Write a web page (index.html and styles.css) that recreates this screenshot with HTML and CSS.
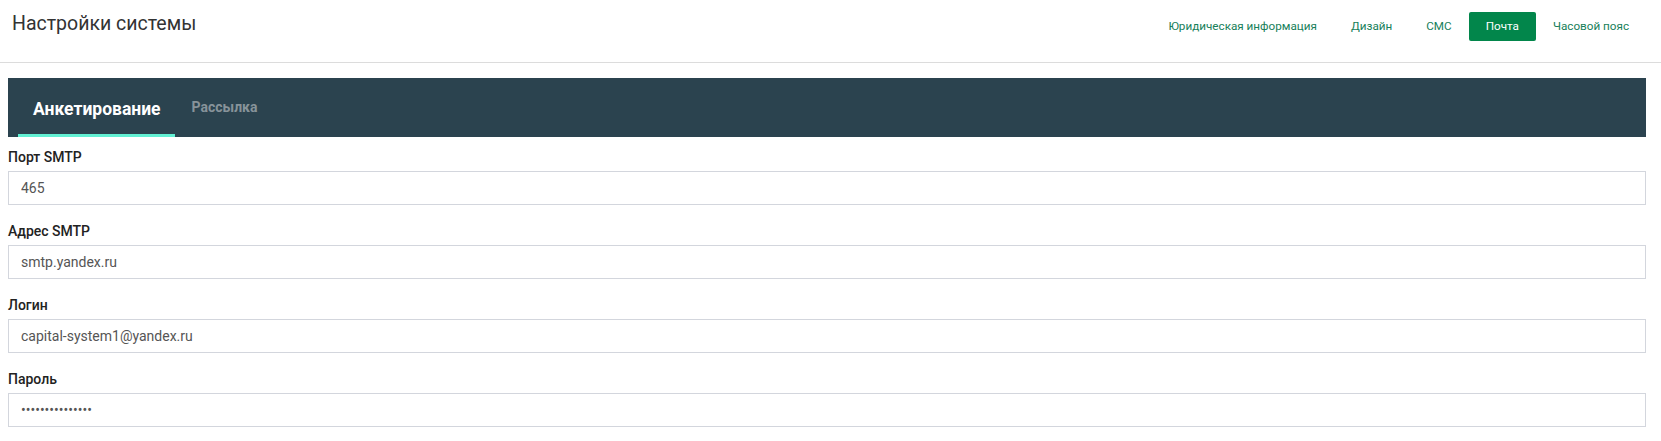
FILE: index.html
```html
<!DOCTYPE html>
<html lang="ru">
<head>
<meta charset="utf-8">
<title>Настройки системы</title>
<link rel="stylesheet" href="styles.css">
</head>
<body>
<header class="topbar">
  <h1 class="page-title">Настройки системы</h1>
  <nav class="nav">
    <a class="nav-item">Юридическая информация</a>
    <a class="nav-item">Дизайн</a>
    <a class="nav-item">СМС</a>
    <a class="nav-item nav-item--active">Почта</a>
    <a class="nav-item">Часовой пояс</a>
  </nav>
</header>
<main class="content">
  <div class="tabs">
    <div class="tab tab--active">Анкетирование</div>
    <div class="tab">Рассылка</div>
  </div>
  <form class="form">
    <div class="field">
      <label class="field-label">Порт SMTP</label>
      <input class="field-input" type="text" value="465">
    </div>
    <div class="field">
      <label class="field-label">Адрес SMTP</label>
      <input class="field-input" type="text" value="smtp.yandex.ru">
    </div>
    <div class="field">
      <label class="field-label">Логин</label>
      <input class="field-input" type="text" value="capital-system1@yandex.ru">
    </div>
    <div class="field">
      <label class="field-label">Пароль</label>
      <input class="field-input" type="password" value="passwordpasswor">
    </div>
  </form>
</main>
</body>
</html>
```
FILE: styles.css
```css
* { box-sizing: border-box; }

html, body {
  margin: 0;
  padding: 0;
  background: #ffffff;
  font-family: Roboto, "Liberation Sans", Arial, sans-serif;
  overflow: hidden;
}

.topbar {
  display: flex;
  justify-content: space-between;
  align-items: flex-start;
  height: 63px;
  padding: 0 15px 0 12px;
  border-bottom: 1px solid #dcdcdc;
}

.page-title {
  margin: 12px 0 0 0;
  font-size: 19.5px;
  font-weight: 400;
  color: #333333;
  line-height: normal;
}

.nav {
  display: flex;
  margin-top: 12px;
}

.nav-item {
  display: block;
  height: 29px;
  line-height: 29px;
  padding: 0 17px;
  font-size: 11.7px;
  color: #17805a;
  border-radius: 2px;
  cursor: pointer;
}

.nav-item--active {
  background: #02864b;
  color: #ffffff;
}

.content {
  padding: 15px 15px 0 8px;
}

.tabs {
  display: flex;
  align-items: flex-start;
  height: 59px;
  padding-left: 10px;
  background: #2b434f;
}

.tab {
  height: 59px;
  padding: 21px 17px 0 17px;
  font-size: 14px;
  font-weight: 700;
  color: #87939a;
  line-height: normal;
}

.tab--active {
  padding: 21px 14px 0 15px;
  font-size: 17.5px;
  color: #ffffff;
  border-bottom: 3px solid #62f0d3;
}

.form {
  display: flex;
  flex-direction: column;
  gap: 17px;
  padding-top: 11px;
}

.field {
  display: flex;
  flex-direction: column;
  gap: 5px;
}

.field-label {
  font-size: 14px;
  font-weight: 500;
  line-height: 18px;
  color: #222222;
}

.field-input {
  display: block;
  width: 100%;
  height: 34px;
  padding: 0 12px;
  border: 1px solid #d3d6dd;
  border-radius: 0;
  font-family: Roboto, "Liberation Sans", Arial, sans-serif;
  font-size: 14px;
  color: #555555;
  background: #ffffff;
  outline: none;
}
```
